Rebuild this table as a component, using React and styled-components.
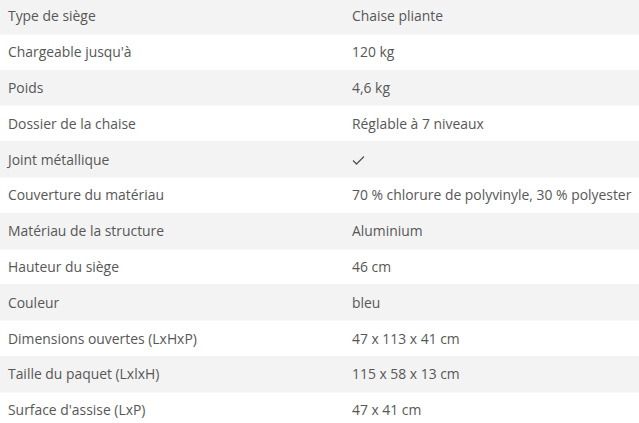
import React from "react"
import styled, { createGlobalStyle } from "styled-components"

const GlobalStyle = createGlobalStyle`
  html, body {
    margin: 0;
    padding: 0;
    background: #ffffff;
    overflow: hidden;
  }
  body {
    font-family: "Open Sans", "Liberation Sans", sans-serif;
  }
`

const Table = styled.div`
  width: 639px;
  margin-top: -2px;
  display: flex;
  flex-direction: column;
`

const Row = styled.div`
  display: grid;
  grid-template-columns: 344px 1fr;
  height: 35.8px;
  align-items: center;
  background: ${props => (props.$shaded ? "#f3f3f3" : "#ffffff")};
  border-top: 1px solid ${props => (props.$shaded ? "#f3f3f3" : "#f8f8f8")};
  box-sizing: border-box;
`

const Cell = styled.div`
  padding-left: 8px;
  font-size: 13.9px;
  color: #575757;
  white-space: nowrap;
  line-height: 20px;
`

const Check = () => (
  <svg width="13" height="11" viewBox="0 0 13 11" style={{ display: "block", marginTop: 2 }}>
    <polyline
      points="1,5.5 4.5,9 12,1.5"
      fill="none"
      stroke="#555555"
      strokeWidth="1.3"
    />
  </svg>
)

const specs = [
  ["Type de siège", "Chaise pliante"],
  ["Chargeable jusqu'à", "120 kg"],
  ["Poids", "4,6 kg"],
  ["Dossier de la chaise", "Réglable à 7 niveaux"],
  ["Joint métallique", "check"],
  ["Couverture du matériau", "70 % chlorure de polyvinyle, 30 % polyester"],
  ["Matériau de la structure", "Aluminium"],
  ["Hauteur du siège", "46 cm"],
  ["Couleur", "bleu"],
  ["Dimensions ouvertes (LxHxP)", "47 x 113 x 41 cm"],
  ["Taille du paquet (LxlxH)", "115 x 58 x 13 cm"],
  ["Surface d'assise (LxP)", "47 x 41 cm"],
]

const App = () => {
  return (
    <>
      <GlobalStyle />
      <Table>
        {specs.map(([label, value], i) => (
          <Row key={label} $shaded={i % 2 === 0}>
            <Cell>{label}</Cell>
            <Cell>{value === "check" ? <Check /> : value}</Cell>
          </Row>
        ))}
      </Table>
    </>
  )
}

export default App
